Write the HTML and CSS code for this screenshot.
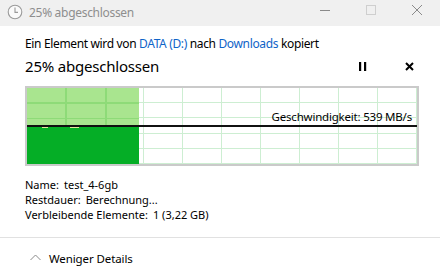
FILE: index.html
```html
<!DOCTYPE html>
<html lang="de">
<head>
<meta charset="utf-8">
<title>25% abgeschlossen</title>
<link rel="stylesheet" href="styles.css">
</head>
<body>
<div class="window">
  <div class="titlebar">
    <svg class="clock" width="16" height="16" viewBox="0 0 16 16">
      <circle cx="8" cy="8" r="6.8" fill="#fafafa" stroke="#9a9a9a" stroke-width="1.1"/>
      <path d="M8 3.6 V8.4 H11" fill="none" stroke="#9a9a9a" stroke-width="1.1"/>
    </svg>
    <span class="title">25% abgeschlossen</span>
    <div class="winctrls">
      <span class="wbtn"><svg width="10" height="10" viewBox="0 0 10 10"><path d="M0 5.5 H10" stroke="#8a8a8a" stroke-width="1"/></svg></span>
      <span class="wbtn"><svg width="10" height="10" viewBox="0 0 10 10"><rect x="0.5" y="0.5" width="9" height="9" fill="none" stroke="#cfcfcf" stroke-width="1"/></svg></span>
      <span class="wbtn"><svg width="10" height="10" viewBox="0 0 10 10"><path d="M0 0 L10 10 M10 0 L0 10" stroke="#8a8a8a" stroke-width="1"/></svg></span>
    </div>
  </div>
  <div class="content">
    <div class="from">Ein Element wird von <span class="link">DATA (D:)</span> nach <span class="link">Downloads</span> kopiert</div>
    <div class="headrow">
      <span class="big">25% abgeschlossen</span>
      <div class="actions">
        <svg width="8" height="9" viewBox="0 0 8 9"><rect x="0" y="0" width="2.2" height="9" fill="#000"/><rect x="5" y="0" width="2.2" height="9" fill="#000"/></svg>
        <svg width="9" height="9" viewBox="0 0 9 9"><path d="M1 1 L8 8 M8 1 L1 8" stroke="#000" stroke-width="2"/></svg>
      </div>
    </div>
    <div class="graph">
      <div class="fill">
        <div class="fill-top"></div>
        <div class="fill-bottom"></div>
      </div>
      <div class="speedline"></div>
      <span class="tick t1"></span>
      <span class="tick t2"></span>
      <span class="speed">Geschwindigkeit: 539 MB/s</span>
    </div>
    <div class="details">
      <div class="drow">Name:<span class="gap"></span>test_4-6gb</div>
      <div class="drow">Restdauer:<span class="gap"></span>Berechnung...</div>
      <div class="drow">Verbleibende Elemente:<span class="gap"></span>1 (3,22 GB)</div>
    </div>
  </div>
  <div class="footer">
    <svg class="chev" width="11" height="7" viewBox="0 0 11 7"><path d="M0.5 6 L5.5 1 L10.5 6" fill="none" stroke="#8a8a8a" stroke-width="1"/></svg>
    <span class="less">Weniger Details</span>
  </div>
</div>
</body>
</html>
```
FILE: styles.css
```css
html, body {
  margin: 0;
  padding: 0;
  background: #ffffff;
}
.window {
  width: 440px;
  height: 278px;
  overflow: hidden;
  font-family: "Noto Sans", "Open Sans", sans-serif;
  font-size: 12px;
  color: #000;
  background: #fff;
}
.titlebar {
  height: 26px;
  background: #f0f0f0;
  display: flex;
  align-items: center;
  padding-left: 7px;
}
.clock {
  display: block;
  margin-top: -2px;
}
.title {
  margin-left: 6px;
  color: #8e8e8e;
  font-size: 12px;
  letter-spacing: -0.3px;
  margin-top: -2px;
}
.winctrls {
  margin-left: auto;
  display: flex;
  align-items: center;
  margin-top: -6px;
}
.wbtn {
  display: flex;
  width: 46px;
  justify-content: center;
}
.wbtn svg { display: block; }
.content {
  padding: 0 21px 0 25px;
}
.from {
  margin-top: 10px;
  line-height: 16px;
  letter-spacing: -0.35px;
}
.link { color: #0f64c8; }
.headrow {
  display: flex;
  align-items: center;
  height: 22px;
  margin-top: 3px;
}
.big {
  font-size: 15px;
  letter-spacing: -0.2px;
}
.actions {
  margin-left: auto;
  display: flex;
  align-items: center;
  gap: 38px;
  padding-right: 5px;
}
.actions svg { display: block; }
.graph {
  position: relative;
  margin-top: 9px;
  height: 76px;
  border: 2px solid #cacaca;
  background-color: #fff;
  background-image:
    repeating-linear-gradient(to right, transparent 0 38px, #cdeed2 38px 39px),
    repeating-linear-gradient(to bottom, transparent 0 14.2px, #cdeed2 14.2px 15.2px);
}
.fill {
  position: absolute;
  left: 0;
  top: 0;
  width: 112px;
  height: 76px;
  display: flex;
  flex-direction: column;
}
.fill-top {
  height: 38px;
  background-color: #a9e58f;
  background-image:
    repeating-linear-gradient(to right, transparent 0 38px, #8edb78 38px 40px),
    repeating-linear-gradient(to bottom, transparent 0 14.2px, #8edb78 14.2px 15.7px);
}
.fill-bottom {
  flex: 1;
  background: #05ae26;
}
.speedline {
  position: absolute;
  left: 0;
  right: 0;
  top: 37px;
  height: 2px;
  background: #111;
}
.tick {
  position: absolute;
  top: 39px;
  height: 1px;
  background: #e2ea9c;
}
.t1 { left: 15px; width: 6px; }
.t2 { left: 43px; width: 9px; }
.speed {
  position: absolute;
  right: 5px;
  top: 21px;
  line-height: 16px;
  font-size: 11.5px;
  letter-spacing: -0.2px;
}
.details {
  margin-top: 11px;
  font-size: 11px;
  line-height: 15px;
}
.drow { height: 15px; }
.gap {
  display: inline-block;
  width: 5px;
}
.footer {
  margin-top: 15px;
  border-top: 1px solid #e1e1e1;
  height: 40px;
  display: flex;
  align-items: center;
  padding-left: 30px;
}
.chev {
  display: block;
  margin-right: 8px;
  margin-top: -1px;
}
.less {
  font-size: 11.5px;
  letter-spacing: -0.1px;
}
```
